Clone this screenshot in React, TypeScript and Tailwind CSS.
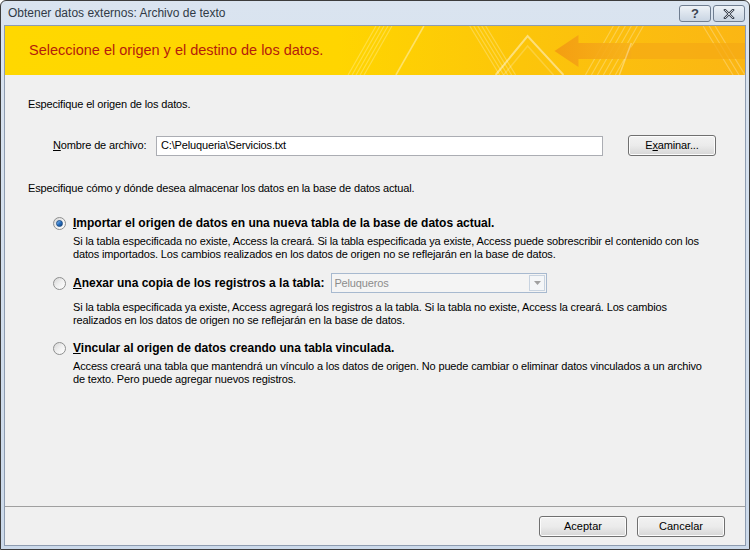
import React from "react";

const font = { fontFamily: '"Liberation Sans", Arial, sans-serif' };

function Radio({ checked }: { checked?: boolean }) {
  return (
    <span className="relative flex h-[13px] w-[13px] shrink-0 items-center justify-center rounded-full border border-[#8e8f8f] bg-gradient-to-br from-[#d6d6d6] via-[#f0f0f0] to-white">
      {checked && (
        <span className="h-[7px] w-[7px] rounded-full border border-[#1b4c85] bg-gradient-to-br from-[#8ec4f6] via-[#2b74c6] to-[#0d3f7d]" />
      )}
    </span>
  );
}

function Btn({ children, className = "" }: { children: React.ReactNode; className?: string }) {
  return (
    <button
      className={
        "flex h-[21px] items-center justify-center rounded-[3px] border border-[#707070] bg-gradient-to-b from-[#f2f2f2] via-[#ebebeb] to-[#d6d6d6] text-[11px] text-black shadow-[inset_0_0_0_1px_#fcfcfc] " +
        className
      }
    >
      {children}
    </button>
  );
}

function BannerArt() {
  return (
    <svg className="absolute inset-0 h-full w-full" viewBox="0 0 742 49" preserveAspectRatio="none">
      <defs>
        <linearGradient id="bg" x1="0" x2="1" y1="0" y2="0">
          <stop offset="0" stopColor="#ffd800" />
          <stop offset="0.45" stopColor="#ffd500" />
          <stop offset="0.7" stopColor="#fcc50a" />
          <stop offset="1" stopColor="#fbb614" />
        </linearGradient>
        <linearGradient id="arr" x1="0" x2="1" y1="0" y2="0">
          <stop offset="0" stopColor="#f39a12" />
          <stop offset="1" stopColor="#f7b21a" />
        </linearGradient>
      </defs>
      <rect width="742" height="49" fill="url(#bg)" />
      <g stroke="#fff" strokeOpacity="0.25" strokeWidth="1.2">
        <path d="M372 0 L344 49 M376 0 L348 49 M380 0 L352 49 M384 0 L356 49 M388 0 L360 49" />
        <path d="M420 0 L392 49" strokeOpacity="0.4" strokeWidth="1.6" />
        <path d="M466 0 L496 49 M470 0 L500 49 M474 0 L504 49 M478 0 L508 49 M482 0 L512 49" />
        <path d="M610 0 L582 49 M616 0 L588 49 M622 0 L594 49 M628 0 L600 49 M634 0 L606 49 M640 0 L612 49" />
        <path d="M700 0 L730 49 M706 0 L736 49 M712 0 L742 49" />
      </g>
      <path d="M492 49 L524 10 L560 49" fill="none" stroke="#fff" strokeOpacity="0.45" strokeWidth="2" />
      <path d="M500 49 L524 20 L550 49" fill="none" stroke="#fff" strokeOpacity="0.2" strokeWidth="1.5" />
      <path d="M551 25 L575 9 L575 17 L628 17 L628 33 L575 33 L575 41 Z" fill="url(#arr)" opacity="0.9" />
      <path d="M631 17 L742 17 L742 33 L620 33 Z" fill="#f6a914" opacity="0.75" />
      <path d="M628 17 L616 49" stroke="#fff" strokeOpacity="0.35" strokeWidth="1.5" />
    </svg>
  );
}

export default function App() {
  return (
    <div className="h-[550px] w-[750px] bg-white" style={font}>
      <div className="flex h-full w-full flex-col rounded-t-[6px] border border-[#3c3c3c] bg-gradient-to-b from-[#dae4f0] to-[#cbd9ea] px-[3px] pb-[3px]">
        {/* Title bar */}
        <div className="flex h-[24px] shrink-0 items-center justify-between">
          <span className="pl-[4px] text-[12px] text-[#303a46]">Obtener datos externos: Archivo de texto</span>
          <div className="mr-[1px] flex gap-[2px] self-start pt-[4px]">
            <span className="flex h-[17px] w-[32px] items-center justify-center rounded-[3px] border border-[#6f7d90] bg-gradient-to-b from-[#eef2f7] to-[#c9d5e3] text-[13px] font-bold leading-none text-[#3b4350]">
              ?
            </span>
            <span className="flex h-[17px] w-[32px] items-center justify-center rounded-[3px] border border-[#6f7d90] bg-gradient-to-b from-[#eef2f7] to-[#c9d5e3]">
              <svg width="12" height="10" viewBox="0 0 12 10">
                <path d="M2 1 L10 9 M10 1 L2 9" stroke="#3b4350" strokeWidth="2.4" strokeLinecap="square" />
                <path d="M2 1 L10 9 M10 1 L2 9" stroke="#f2f5f9" strokeWidth="0.8" />
              </svg>
            </span>
          </div>
        </div>

        {/* Client area */}
        <div className="flex flex-1 flex-col border border-[#8e9cb0] bg-[#f0f0f0]">
          <div className="relative flex h-[49px] shrink-0 items-center">
            <BannerArt />
            <span className="relative pl-[24px] text-[14.5px] text-[#b51c0b]">
              Seleccione el origen y el destino de los datos.
            </span>
          </div>

          <div className="flex flex-1 flex-col pl-[23px] pr-[28px] pt-[23px] text-[11px] leading-[13px] tracking-[-0.15px] text-black">
            <p>Especifique el origen de los datos.</p>

            <div className="mt-[24px] flex items-center pl-[25px]">
              <span className="w-[103px]">
                <span className="underline">N</span>ombre de archivo:
              </span>
              <div className="flex h-[20px] w-[447px] items-center border border-[#abadb3] bg-white pl-[4px]">
                C:\Peluqueria\Servicios.txt
              </div>
              <Btn className="ml-[25px] w-[88px]">
                E<span className="underline">x</span>aminar...
              </Btn>
            </div>

            <p className="mt-[26px]">Especifique cómo y dónde desea almacenar los datos en la base de datos actual.</p>

            {/* Option 1 */}
            <div className="mt-[20px] pl-[25px]">
              <div className="flex h-[16px] items-center gap-[7px]">
                <Radio checked />
                <span className="text-[12px] font-bold tracking-normal">
                  <span className="underline">I</span>mportar el origen de datos en una nueva tabla de la base de datos actual.
                </span>
              </div>
              <p className="mt-[4px] max-w-[654px] pl-[20px]">
                Si la tabla especificada no existe, Access la creará. Si la tabla especificada ya existe, Access puede sobrescribir el contenido con los datos importados. Los cambios realizados en los datos de origen no se reflejarán en la base de datos.
              </p>
            </div>

            {/* Option 2 */}
            <div className="mt-[12px] pl-[25px]">
              <div className="flex h-[20px] items-center gap-[7px]">
                <Radio />
                <span className="text-[12px] font-bold tracking-normal">
                  <span className="underline">A</span>nexar una copia de los registros a la tabla:
                </span>
                <div className="flex h-[20px] w-[216px] items-center justify-between border border-[#a7b9cf] bg-[#f4f4f4] pl-[2px] text-[#8c8c8c]">
                  Peluqueros
                  <span className="mr-[1px] flex h-[16px] w-[16px] items-center justify-center border border-[#c8d3e0] bg-[#f4f6f8]">
                    <svg width="7" height="4" viewBox="0 0 7 4">
                      <path d="M0 0 L7 0 L3.5 4 Z" fill="#a0a0a0" />
                    </svg>
                  </span>
                </div>
              </div>
              <p className="mt-[8px] max-w-[654px] pl-[20px]">
                Si la tabla especificada ya existe, Access agregará los registros a la tabla. Si la tabla no existe, Access la creará. Los cambios realizados en los datos de origen no se reflejarán en la base de datos.
              </p>
            </div>

            {/* Option 3 */}
            <div className="mt-[13px] pl-[25px]">
              <div className="flex h-[16px] items-center gap-[7px]">
                <Radio />
                <span className="text-[12px] font-bold tracking-normal">
                  <span className="underline">V</span>incular al origen de datos creando una tabla vinculada.
                </span>
              </div>
              <p className="mt-[4px] max-w-[654px] pl-[20px]">
                Access creará una tabla que mantendrá un vínculo a los datos de origen. No puede cambiar o eliminar datos vinculados a un archivo de texto. Pero puede agregar nuevos registros.
              </p>
            </div>
          </div>

          {/* Footer */}
          <div className="flex h-[39px] shrink-0 items-center justify-end gap-[10px] border-t border-[#a0a0a0] pr-[20px]">
            <Btn className="w-[88px]">Aceptar</Btn>
            <Btn className="w-[88px]">Cancelar</Btn>
          </div>
        </div>
      </div>
    </div>
  );
}
